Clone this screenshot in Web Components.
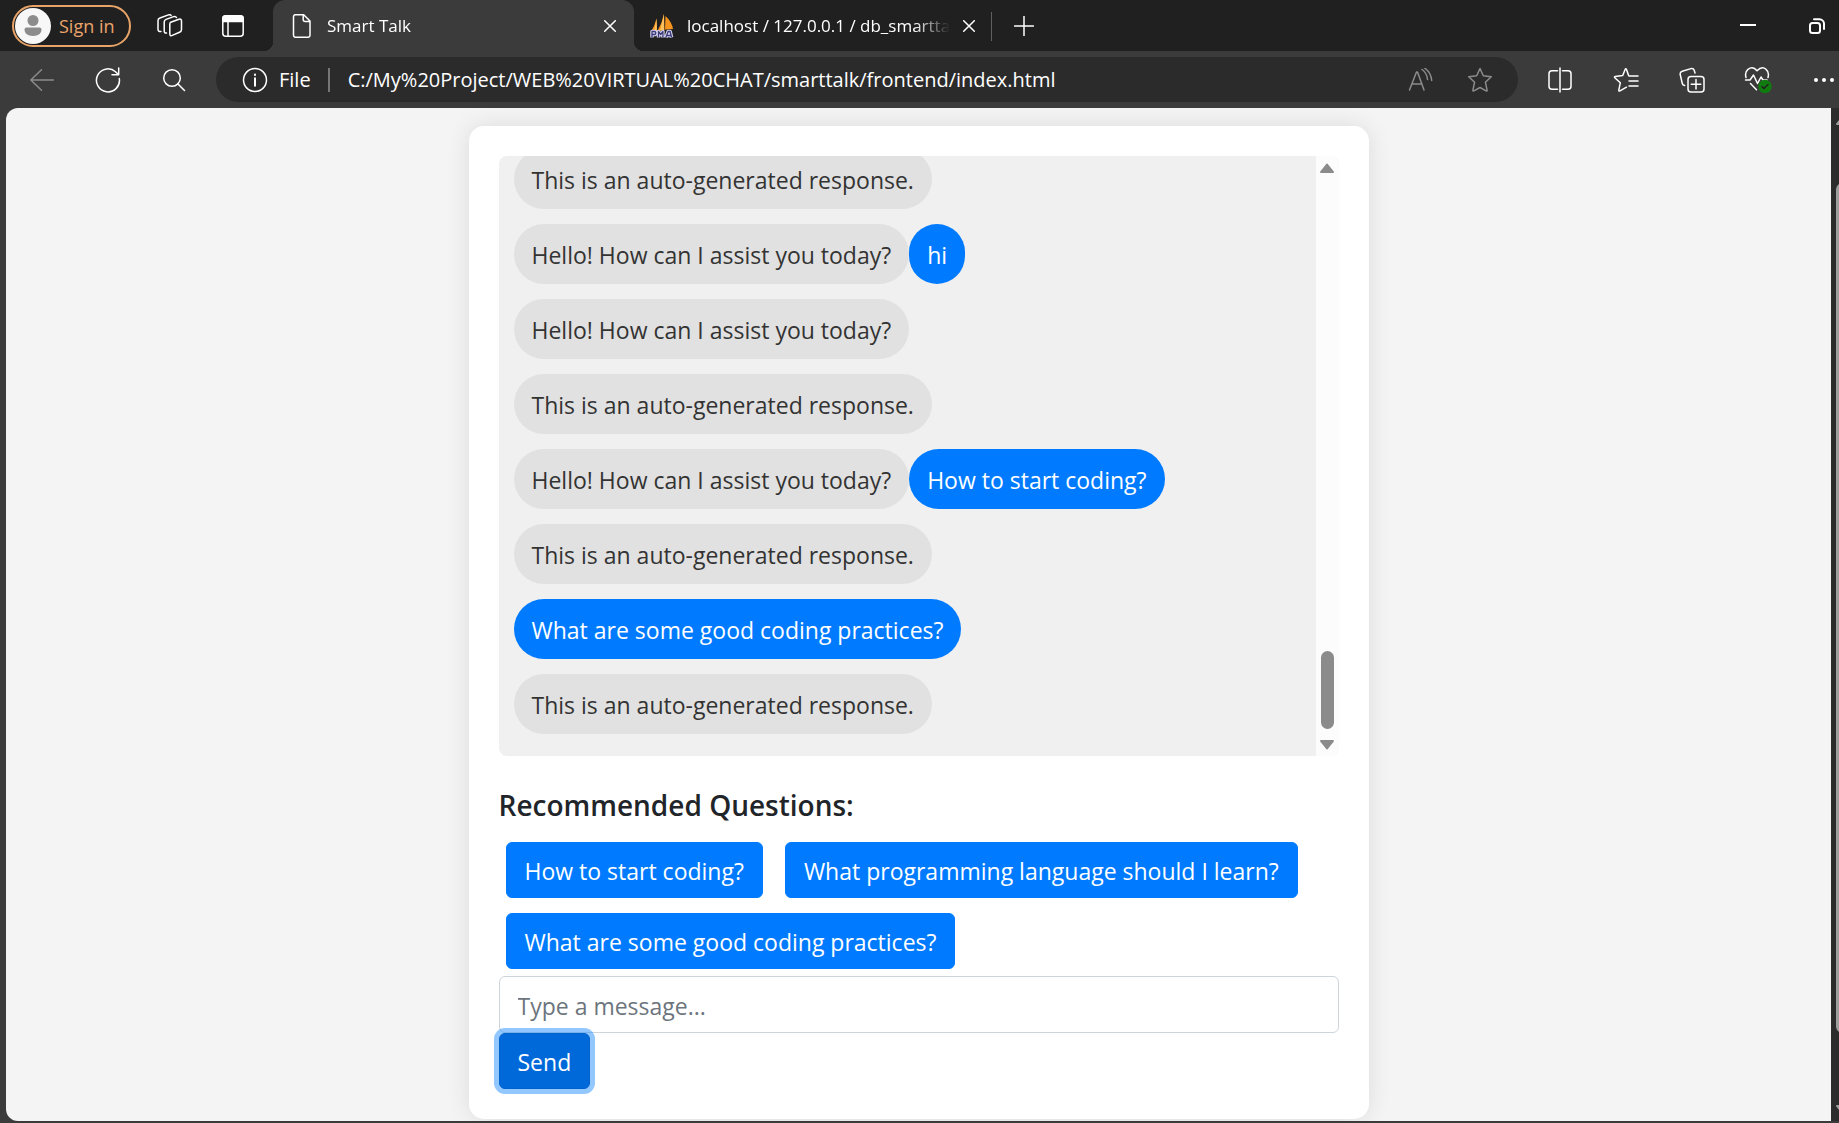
<!DOCTYPE html>
<html lang="en">
<head>
<meta charset="utf-8">
<title>Smart Talk</title>
<style>
  html, body { margin: 0; height: 100%; }
  body { font-family: "Open Sans", "Noto Sans", sans-serif; background: #3b3b3b; overflow: hidden; }
</style>
</head>
<body>
<browser-window>
  <tab-strip slot="tabs">
    <browser-tab active label="Smart Talk"><ui-icon slot="icon" name="page"></ui-icon></browser-tab>
    <browser-tab label="localhost / 127.0.0.1 / db_smartta"><ui-icon slot="icon" name="pma"></ui-icon></browser-tab>
  </tab-strip>
  <address-toolbar slot="toolbar" url="C:/My%20Project/WEB%20VIRTUAL%20CHAT/smarttalk/frontend/index.html"></address-toolbar>
  <chat-card>
    <chat-log slot="log">
      <chat-row><chat-bubble>This is an auto-generated response.</chat-bubble></chat-row>
      <chat-row><chat-bubble>Hello! How can I assist you today?</chat-bubble><chat-bubble user>hi</chat-bubble></chat-row>
      <chat-row><chat-bubble>Hello! How can I assist you today?</chat-bubble></chat-row>
      <chat-row><chat-bubble>This is an auto-generated response.</chat-bubble></chat-row>
      <chat-row><chat-bubble>Hello! How can I assist you today?</chat-bubble><chat-bubble user>How to start coding?</chat-bubble></chat-row>
      <chat-row><chat-bubble>This is an auto-generated response.</chat-bubble></chat-row>
      <chat-row><chat-bubble user>What are some good coding practices?</chat-bubble></chat-row>
      <chat-row><chat-bubble>This is an auto-generated response.</chat-bubble></chat-row>
    </chat-log>
    <question-list heading="Recommended Questions:">
      <action-button>How to start coding?</action-button>
      <action-button>What programming language should I learn?</action-button>
      <action-button>What are some good coding practices?</action-button>
    </question-list>
    <message-form></message-form>
  </chat-card>
</browser-window>

<script>
const define = (name, html, setup) => {
  const template = document.createElement('template');
  template.innerHTML = '<style>*{box-sizing:border-box}:host{box-sizing:border-box}button{font:inherit;color:inherit;cursor:pointer}</style>' + html;
  customElements.define(name, class extends HTMLElement {
    connectedCallback() {
      if (this.shadowRoot) return;
      const root = this.attachShadow({ mode: 'open' });
      root.append(template.content.cloneNode(true));
      if (setup) setup(this, root);
    }
  });
};

const icons = {
  page: [24, 24, '<path d="M5.5 .7h8.2l6.3 6.3v14.3a2 2 0 0 1-2 2H5.5a2 2 0 0 1-2-2V2.700a2 2 0 0 1 2-2zM13.200 1v4.500a2 2 0 0 0 2 2h4.500"/>'],
  pma: [24, 24, '<g stroke="none"><path fill="#f7941d" d="M6.500 4.500Q5 11 1 18l6-1zM14 0Q12 9 7.500 17l7-1zM15.500 2Q22 8 23 15l-8 .5z"/><path fill="#ffc15c" d="M6.500 4.500L7 17l-3 .5zM14 0v16l-4 .5z"/></g><g stroke-linecap="butt"><path stroke="#d5d3ee" stroke-width="3.500" d="M2 23.500v-6h3q1.500 1.500 0 3H2m6.500 3v-6l2.200 3 2.200-3v6m3 0l2.200-6h2l1.500 6m-5-2h4"/><path stroke="#3c3a78" stroke-width="1.300" d="M2 23.500v-6h3q1.500 1.500 0 3H2m6.500 3v-6l2.200 3 2.200-3v6m3 0l2.200-6h2l1.500 6m-5-2h4"/></g>'],
  close: [12, 12, '<path d="M.7 .7l10.600 10.600M11.300 .7L.7 11.300"/>'],
  plus: [20, 20, '<path d="M10 .5v19M.5 10h19"/>'],
  workspaces: [26, 24, '<path d="M13.700 8.200l8.300-3q2.500-.7 2.500 1.800v8.500q0 2-2 2.700l-7.200 3.200q-2.500 1-2.500-1.600V10.500q0-1.700.9-2.300z"/><path d="M9.500 19q-2.300.3-2.300-2V8q0-1.900 1.900-2.600l7.500-2.800q2-.7 2.900.9"/><path d="M4 17.500q-3 .3-3-2.200V6.600q0-1.900 1.900-2.600l8.600-3.100q1.700-.6 2.600.5"/>'],
  tabmenu: [22, 22, '<rect x=".8" y=".8" width="20.400" height="20.400" rx="3"/><path fill="currentColor" d="M1 6.500V3a2 2 0 0 1 2-2h16a2 2 0 0 1 2 2v3.500z"/><path d="M6 6v15"/>'],
  back: [24, 22, '<path d="M23.500 11H.8M11.500 .8L.8 11l10.700 10.200"/>'],
  refresh: [26, 26, '<path d="M24.300 11.500A11.500 11.500 0 1 1 20.500 4.700L23.300 7.500M23.700 1v6.700H17"/>'],
  search: [24, 24, '<circle cx="10" cy="10" r="8.300"/><path d="M16 16l6.500 6.500"/>'],
  info: [26, 26, '<circle cx="13" cy="13" r="11.500"/><path stroke-width="2" d="M13 11.300v7.500M13 7.500v.5"/>'],
  read: [26, 24, '<path d="M2.500 22L9.500 4h1L17 22M5 16h10M15 1.500q5 3.500 5.500 10M17.500 0Q24 4.500 24.700 12.500"/>'],
  star: [26, 26, '<path d="M13 1.500l3.300 7.300 8 .9-5.900 5.500 1.700 7.900q.2 1.300-1 .8L13 20.500l-6.100 3.400q-1.200.5-1-.8l1.700-7.900-5.900-5.500 8-.9z"/>'],
  split: [26, 26, '<path d="M13 1v24M10.500 3.700H5a3 3 0 0 0-3 3v12.600a3 3 0 0 0 3 3h5.500M15.500 3.700H21a3 3 0 0 1 3 3v12.600a3 3 0 0 1-3 3h-5.500"/>'],
  favorites: [26, 26, '<path d="M17.500 9l-1.800-.3L13.500 2.500q-.7-1.500-1.400 0L9.700 8.500l-7.500 1q-1.300.4-.4 1.300l5.500 5-1.500 7.400q0 1.300 1.200.7l6.500-3.700M16 9h9M16 14h9M16 19h9"/>'],
  collections: [26, 26, '<rect x="9" y="9.500" width="16" height="15.500" rx="3"/><path d="M17 12.500v9.500M12.200 17.200h9.600M5.700 18.500Q3.700 18.300 3.300 16.500L1.200 7.500Q.8 5 3.200 4.200L12 1.600q2.400-.5 3.200 1.600L16 6"/>'],
  health: [28, 28, '<path d="M2 11.500Q.5 6 4 3.300 9-.3 13 4.800 18-.3 22 3.300q3.500 2.700 2 8.200M1.500 14h4.500l3.500-5 4 8.500 3.500-6.500 2 3h4M6.500 17.500l6 6.200"/><circle cx="21" cy="20.500" r="6.700" fill="#107c10" stroke="none"/><path stroke="#222" d="M18 20.500l2 2 4-4"/>'],
  more: [20, 4, '<g fill="currentColor" stroke="none"><circle cx="2" cy="2" r="2"/><circle cx="10" cy="2" r="2"/><circle cx="18" cy="2" r="2"/></g>'],
  minimise: [16, 16, '<path stroke-width="2" d="M0 7h16"/>'],
  restore: [16, 16, '<g stroke-width="2"><rect x="1" y="5" width="10" height="10" rx="2.500"/><path d="M5 1.300h5.500A4.500 4.500 0 0 1 15 5.800V11"/></g>'],
  user: [36, 36, '<g stroke="none"><circle cx="18" cy="18" r="18" fill="#f7f7f7"/><circle cx="18" cy="12.500" r="5.500" fill="#8c8c8c"/><path fill="#8c8c8c" d="M11.500 19.500h13q2 0 2 2 0 6.500-8.500 6.500t-8.500-6.500q0-2 2-2z"/></g>'],
  up: [16, 12, '<path fill="currentColor" stroke-width="2" d="M8 2.500L14 10H2z"/>'],
  down: [16, 12, '<path fill="currentColor" stroke-width="2" d="M8 9.500L14 2H2z"/>']
};

define('ui-icon', '<style>:host,div{display:flex;flex:none}</style><div></div>', (el, root) => {
  const [w, h, body] = icons[el.getAttribute('name')];
  root.querySelector('div').innerHTML =
    `<svg width="${w}" height="${h}" viewBox="0 0 ${w} ${h}" fill="none" stroke="currentColor" stroke-width="1.5" stroke-linecap="round" stroke-linejoin="round" aria-hidden="true">${body}</svg>`;
});

define('icon-button', `
<style>
  :host { display: flex; flex: none; width: 66px; height: 44px; }
  button { display: flex; align-items: center; justify-content: center; flex: 1; padding: 0; border: 0; background: none; }
</style>
<button type="button"></button>`, (el, root) => {
  const button = root.querySelector('button');
  button.setAttribute('aria-label', el.getAttribute('icon'));
  button.innerHTML = `<ui-icon name="${el.getAttribute('icon')}"></ui-icon>`;
});

define('browser-window', `
<style>
  :host { display: flex; flex-direction: column; height: 100vh; }
  .view { display: flex; flex: 1; min-height: 0; padding: 0 0 2px 6px; }
  main { flex: 1; min-width: 0; overflow: hidden; padding: 18px 20px 0; background: #f4f4f4; border-radius: 12px 0 0 12px; }
  .edge { display: flex; width: 8px; overflow: hidden; }
  scroll-bar { --track: #2c2c2c; --thumb: #9f9f9f; --before: 52; --size: 850; --after: 65; }
</style>
<slot name="tabs"></slot>
<slot name="toolbar"></slot>
<div class="view"><main><slot></slot></main><div class="edge"><scroll-bar></scroll-bar></div></div>`);

define('tab-strip', `
<style>
  :host { display: flex; height: 51px; background: #202020; color: #fff; font-size: 17px; }
  .start { display: flex; align-items: center; width: 273px; flex: none; padding-left: 12px; }
  .account { display: flex; align-items: center; gap: 8px; height: 42px; padding: 0 14px 0 1px; border: 2px solid #e8a468; border-radius: 21px; background: none; color: #eba46c; font-size: 18px; white-space: nowrap; }
  .start icon-button { width: 63px; }
  .start icon-button:first-of-type { margin-left: 8px; }
  .divider { width: 1px; height: 29px; margin: 12px 0 0; background: #606060; }
  .new { width: 64px; height: 51px; }
  .controls { display: flex; margin-left: auto; }
  .controls icon-button { width: 69px; height: 51px; }
  .controls icon-button:last-child { margin-right: -12px; }
</style>
<div class="start">
  <button class="account" type="button"><ui-icon name="user"></ui-icon>Sign in</button>
  <icon-button icon="workspaces"></icon-button>
  <icon-button icon="tabmenu"></icon-button>
</div>
<slot></slot>
<span class="divider"></span>
<icon-button class="new" icon="plus"></icon-button>
<div class="controls"><icon-button icon="minimise"></icon-button><icon-button icon="restore"></icon-button></div>`);

define('browser-tab', `
<style>
  :host { position: relative; display: flex; align-items: center; gap: 13px; width: 357px; padding: 0 16px; }
  :host([active]) { width: 361px; padding: 0 18px 0 17px; background: #3b3b3b; border-radius: 12px 12px 0 0; }
  :host([active])::before, :host([active])::after { content: ""; position: absolute; bottom: 0; width: 9px; height: 9px; }
  :host([active])::before { right: 100%; background: radial-gradient(circle at 0 0, #202020 9px, #3b3b3b 9px); }
  :host([active])::after { left: 100%; background: radial-gradient(circle at 100% 0, #202020 9px, #3b3b3b 9px); }
  a { flex: 1; min-width: 0; white-space: nowrap; color: inherit; text-decoration: none; -webkit-mask-image: linear-gradient(90deg, #000 calc(100% - 36px), transparent); mask-image: linear-gradient(90deg, #000 calc(100% - 36px), transparent); }
  icon-button { width: 12px; }
</style>
<slot name="icon"></slot><a href="#"></a><icon-button icon="close"></icon-button>`, (el, root) => {
  root.querySelector('a').textContent = el.getAttribute('label');
});

define('address-toolbar', `
<style>
  :host { display: flex; align-items: center; height: 57px; padding-left: 9px; background: #3b3b3b; color: #fff; font-size: 20px; overflow: hidden; }
  .dim { color: #8c8c8c; }
  .bar { display: flex; align-items: center; flex: 1; min-width: 0; height: 45px; margin: 0 9px; padding: 0 8px 0 26px; background: #2b2b2b; border-radius: 23px; }
  label { margin-left: 11px; }
  .divider { width: 2px; height: 24px; margin: 0 18px 0 17px; background: #777; }
  input { flex: 1; min-width: 0; padding: 0; border: 0; outline: 0; background: none; color: inherit; font: inherit; }
  .bar icon-button { width: 60px; }
  .last { margin-right: -18px; }
</style>
<icon-button class="dim" icon="back"></icon-button>
<icon-button icon="refresh"></icon-button>
<icon-button icon="search"></icon-button>
<div class="bar">
  <ui-icon name="info"></ui-icon>
  <label for="address">File</label>
  <span class="divider"></span>
  <input id="address" type="text" spellcheck="false">
  <icon-button class="dim" icon="read"></icon-button>
  <icon-button class="dim" icon="star"></icon-button>
</div>
<icon-button icon="split"></icon-button>
<icon-button icon="favorites"></icon-button>
<icon-button icon="collections"></icon-button>
<icon-button icon="health"></icon-button>
<icon-button class="last" icon="more"></icon-button>`, (el, root) => {
  root.querySelector('input').value = el.getAttribute('url');
});

define('scroll-bar', `
<style>
  :host { display: flex; flex-direction: column; align-items: center; flex: none; width: 23px; background: var(--track); color: var(--thumb); }
  ui-icon { height: 23px; align-items: center; }
  .before { flex: var(--before) 0 0; }
  .thumb { flex: var(--size) 0 0; width: 13px; border-radius: 7px; background: var(--thumb); }
  .after { flex: var(--after) 0 0; }
</style>
<ui-icon name="up"></ui-icon><span class="before"></span><span class="thumb"></span><span class="after"></span><ui-icon name="down"></ui-icon>`);

define('chat-card', `
<style>
  :host { display: block; max-width: 900px; margin: 0 auto; padding: 30px; background: #fff; border-radius: 15px; box-shadow: 0 0 23px rgba(0, 0, 0, .1); color: #212529; font-size: 23px; line-height: 36px; }
</style>
<slot name="log"></slot><slot></slot>`);

define('chat-log', `
<style>
  :host { display: flex; height: 600px; overflow: hidden; background: #f0f0f0; border-radius: 8px; }
  .rows { display: flex; flex-direction: column; justify-content: flex-end; gap: 15px; flex: 1; min-width: 0; padding: 0 15px 22px; }
  scroll-bar { --track: #fcfcfc; --thumb: #8b8b8b; --before: 472; --size: 78; --after: 4; }
</style>
<div class="rows"><slot></slot></div><scroll-bar></scroll-bar>`);

define('chat-row', '<style>:host{display:flex;flex:none}</style><slot></slot>');

define('chat-bubble', `
<style>
  :host { display: block; padding: 13px 18px 11px; border-radius: 30px; background: #e1e1e1; color: #333; white-space: nowrap; }
  :host([user]) { background: #007bff; color: #fff; }
</style>
<slot></slot>`);

define('question-list', `
<style>
  :host { display: block; margin-top: 30px; }
  h2 { margin: 0 0 18px; font-size: 28px; font-weight: 600; line-height: 38px; }
  div { display: flex; flex-wrap: wrap; gap: 15px 22px; padding: 0 7px; }
</style>
<h2></h2><div><slot></slot></div>`, (el, root) => {
  root.querySelector('h2').textContent = el.getAttribute('heading');
});

define('action-button', `
<style>
  :host { display: inline-flex; }
  button { padding: 10px 18px 8px; border: 1px solid #007bff; border-radius: 6px; background: #007bff; color: #fff; white-space: nowrap; }
  :host([focused]) button { border-color: #0062cc; background: #0069d9; box-shadow: 0 0 0 5px rgba(38, 143, 255, .5); }
</style>
<button type="button"><slot></slot></button>`);

define('message-form', `
<style>
  :host { display: block; margin-top: 7px; }
  form { display: flex; flex-direction: column; align-items: flex-start; margin: 0; }
  input { width: 100%; height: 57px; padding: 2px 18px 0; border: 1px solid #ced4da; border-radius: 6px; background: #fff; color: #495057; font: inherit; }
  input::placeholder { color: #6c757d; opacity: 1; }
</style>
<form><input type="text" placeholder="Type a message..." aria-label="Type a message"><action-button focused>Send</action-button></form>`);
</script>
</body>
</html>
